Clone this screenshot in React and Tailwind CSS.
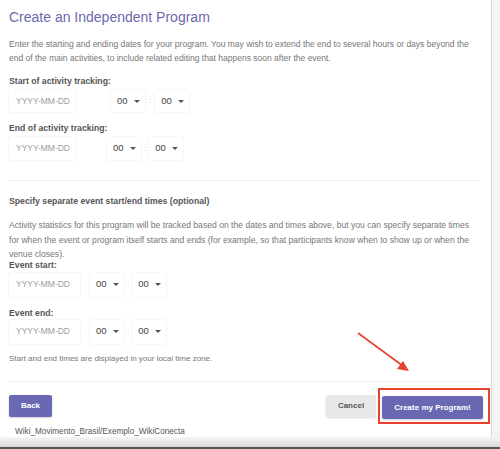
import React from 'react';

const PURPLE = 'bg-[#6a68b3]';
const FIELD = 'h-full flex items-center bg-white shadow-[0_0_2px_rgba(0,0,0,0.1)] whitespace-nowrap';

function Caret() {
  return <span className="ml-[6px] inline-block border-x-[3px] border-t-[3px] border-x-transparent border-t-[#555]" />;
}

function TimeRow({ h = 'h-[22px]', dateW, gap, selW, colon }) {
  return (
    <div className={`flex items-center ${h}`}>
      <div className={`${FIELD} ${dateW} pl-[7px] text-[8.5px] text-[#a0a0a0]`}>YYYY-MM-DD</div>
      <div className={`${FIELD} ${gap} ${selW} pl-[6px] text-[9.5px] text-[#444]`}>
        00<Caret />
      </div>
      <span className={`${colon} text-[8px] text-[#bbb]`}>:</span>
      <div className={`${FIELD} ${selW} pl-[6px] text-[9.5px] text-[#444]`}>
        00<Caret />
      </div>
    </div>
  );
}

function Label({ children, className = '' }) {
  return <div className={`text-[8.7px] leading-[12px] font-bold text-[#555] ${className}`}>{children}</div>;
}

export default function App() {
  return (
    <div className="w-[500px] h-[449px] overflow-hidden bg-[#f4f4f4] flex flex-col font-['Liberation_Sans',Arial,sans-serif]">
      <div className="flex flex-1 min-h-0">
        <div className="w-[492px] bg-white border-r border-[#d8d8d8] flex flex-col px-[9px] pt-[7px] relative">
          <h1 className="text-[14px] leading-[20px] text-[#6b69ad]">Create an Independent Program</h1>
          <p className="mt-[10px] mr-[-6px] text-[8.5px] leading-[14px] text-[#777]">
            Enter the starting and ending dates for your program. You may wish to extend the end to several hours or days beyond the
            <br />
            end of the main activities, to include related editing that happens soon after the event.
          </p>
          <Label className="mt-[10px]">Start of activity tracking:</Label>
          <div className="mt-[3px]">
            <TimeRow dateW="w-[66px]" gap="ml-[36px]" selW="w-[34px]" colon="mx-[4px]" />
          </div>
          <Label className="mt-[10px]">End of activity tracking:</Label>
          <div className="mt-[3px]">
            <TimeRow h="h-[23px]" dateW="w-[66px]" gap="ml-[32px]" selW="w-[34px]" colon="mx-[3px]" />
          </div>
          <div className="mt-[20px] mr-[3px] border-t border-[#eeeeee]" />
          <Label className="mt-[14px]">Specify separate event start/end times (optional)</Label>
          <p className="mt-[11px] mr-[-6px] text-[8.6px] leading-[14.5px] text-[#777]">
            Activity statistics for this program will be tracked based on the dates and times above, but you can specify separate times
            <br />
            for when the event or program itself starts and ends (for example, so that participants know when to show up or when the
            <br />
            venue closes).
          </p>
          <Label className="mt-[-3px]">Event start:</Label>
          <div className="mt-[2px]">
            <TimeRow h="h-[24px]" dateW="w-[71px]" gap="ml-[10px]" selW="w-[34px]" colon="mx-[3px]" />
          </div>
          <Label className="mt-[10px]">Event end:</Label>
          <div className="mt-[1px]">
            <TimeRow h="h-[24px]" dateW="w-[71px]" gap="ml-[10px]" selW="w-[34px]" colon="mx-[3px]" />
          </div>
          <p className="mt-[9px] text-[8px] leading-[12px] text-[#777]">Start and end times are displayed in your local time zone.</p>
          <div className="mt-[16px] mr-[3px] border-t border-[#eeeeee]" />
          <div className="mt-[6px] flex items-center">
            <button className={`${PURPLE} w-[43px] h-[22px] rounded-[2px] text-white text-[8px] font-bold shadow-[0_1px_2px_rgba(0,0,0,0.2)]`}>Back</button>
            <div className="flex-1" />
            <button className="w-[50px] h-[22px] rounded-[2px] bg-[#e8e8e8] text-[#555] text-[8px] font-bold shadow-[0_1px_2px_rgba(0,0,0,0.15)]">Cancel</button>
            <div className="ml-[2px] mr-[-8px] pl-[2px] pr-[5px] py-[3px] border-2 border-[#e8412c]">
              <button className={`${PURPLE} w-[101px] h-[23px] rounded-[2px] text-white text-[8px] font-bold shadow-[0_1px_2px_rgba(0,0,0,0.2)]`}>Create my Program!</button>
            </div>
          </div>
          <div className="mt-[2px] ml-[6px] text-[8.2px] leading-[12px] text-[#555]">Wiki_Movimento_Brasil/Exemplo_WikiConecta</div>
          <svg className="absolute left-[354px] top-[330px]" width="60" height="46" viewBox="0 0 60 46">
            <line x1="4" y1="3" x2="49" y2="36" stroke="#e8412c" strokeWidth="1.6" />
            <polygon points="55,41 43,39 49,31" fill="#e8412c" />
          </svg>
        </div>
        <div className="flex-1" />
      </div>
      <div className="h-[10px] bg-gradient-to-b from-[#f6f6f6] to-[#d8d8d8] shrink-0" />
      <div className="h-[2px] bg-[#555] shrink-0" />
    </div>
  );
}
